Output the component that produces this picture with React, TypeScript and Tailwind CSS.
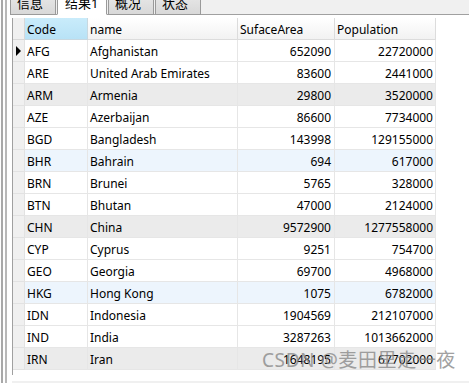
import React from "react";

const rows: [string, string, string, string, string][] = [
  ["AFG", "Afghanistan", "652090", "22720000", "w"],
  ["ARE", "United Arab Emirates", "83600", "2441000", "w"],
  ["ARM", "Armenia", "29800", "3520000", "g"],
  ["AZE", "Azerbaijan", "86600", "7734000", "w"],
  ["BGD", "Bangladesh", "143998", "129155000", "w"],
  ["BHR", "Bahrain", "694", "617000", "b"],
  ["BRN", "Brunei", "5765", "328000", "w"],
  ["BTN", "Bhutan", "47000", "2124000", "w"],
  ["CHN", "China", "9572900", "1277558000", "g"],
  ["CYP", "Cyprus", "9251", "754700", "w"],
  ["GEO", "Georgia", "69700", "4968000", "w"],
  ["HKG", "Hong Kong", "1075", "6782000", "b"],
  ["IDN", "Indonesia", "1904569", "212107000", "w"],
  ["IND", "India", "3287263", "1013662000", "w"],
  ["IRN", "Iran", "1648195", "67702000", "g"],
];

const bgFor = (k: string) =>
  k === "g" ? "bg-[#ebebeb]" : k === "b" ? "bg-[#edf5fd]" : "bg-white";

export default function App() {
  return (
    <div
      className="relative w-[469px] h-[383px] overflow-hidden bg-white text-black flex"
      style={{ fontFamily: "'Noto Sans', 'Noto Sans CJK SC', sans-serif" }}
    >
      {/* left frame lines */}
      <div className="w-[10px] h-full flex shrink-0">
        <div className="ml-[1px] w-[6px] h-full border-l-2 border-r-2 border-l-[#a8a8a8] border-r-[#b8b8b8]" />
      </div>

      <div className="flex-1 flex flex-col h-full">
        {/* tab bar */}
        <div className="h-[15px] bg-[#f0f0f0] border-b border-[#a0a0a0] flex items-end relative">
          <div className="flex h-[26px] items-stretch -mb-[1px]">
            <div className="w-[46px] border border-[#9a9a9a] bg-gradient-to-b from-[#ececec] to-[#d8d8d8] text-[13px] leading-none flex items-center pl-[6px] pt-[2px]">
              信息
            </div>
            <div className="w-[50px] ml-[1px] border border-[#9a9a9a] border-b-white bg-white text-[13px] leading-none flex items-center pl-[7px] pt-[2px]">
              结果1
            </div>
            <div className="w-[46px] ml-[1px] border border-[#9a9a9a] bg-gradient-to-b from-[#ececec] to-[#d8d8d8] text-[13px] leading-none flex items-center pl-[6px] pt-[2px]">
              概况
            </div>
            <div className="w-[46px] ml-[1px] border border-[#9a9a9a] bg-gradient-to-b from-[#ececec] to-[#d8d8d8] text-[13px] leading-none flex items-center pl-[6px] pt-[2px]">
              状态
            </div>
          </div>
        </div>

        {/* table area */}
        <div className="flex-1 pl-[2px] pt-[3px] flex flex-col">
          <div className="w-[424px] border-l border-[#a0a0a0] h-[357px] flex flex-col">
            {/* header */}
            <div className="flex h-[22px] text-[12px] leading-[22px] overflow-hidden">
              <div className="w-[12px] bg-[#f0f0f0] border-r border-b border-[#d8d8d8]" />
              <div className="w-[63px] bg-gradient-to-b from-[#c9ecfb] to-[#b8e2f6] border-r border-b border-[#c8d8e0] pl-[2px] pt-[1px]">
                Code
              </div>
              <div className="w-[150px] bg-gradient-to-b from-[#ffffff] to-[#f2f2f2] border-r border-b border-[#dcdcdc] pl-[2px] pt-[1px]">
                name
              </div>
              <div className="w-[97px] bg-gradient-to-b from-[#ffffff] to-[#f2f2f2] border-r border-b border-[#dcdcdc] pl-[2px] pt-[1px]">
                SufaceArea
              </div>
              <div className="w-[101px] bg-gradient-to-b from-[#ffffff] to-[#f2f2f2] border-r border-b border-[#dcdcdc] pl-[2px] pt-[1px]">
                Population
              </div>
            </div>
            {rows.map((r, i) => (
              <div key={r[0]} className="flex h-[22px] text-[12px] leading-[20px] overflow-hidden">
                <div className="w-[12px] bg-[#f0f0f0] border-r border-b border-[#e2e2e2] relative">
                  {i === 0 && (
                    <div className="absolute left-[3px] top-[6px] w-0 h-0 border-y-[5px] border-y-transparent border-l-[5px] border-l-black" />
                  )}
                </div>
                <div className={`w-[63px] ${bgFor(r[4])} border-r border-b border-[#e6e6e6] pl-[2px] pt-[2px]`}>
                  {r[0]}
                </div>
                <div className={`w-[150px] ${bgFor(r[4])} border-r border-b border-[#e6e6e6] pl-[2px] pt-[2px]`}>
                  {r[1]}
                </div>
                <div className={`w-[97px] ${bgFor(r[4])} border-r border-b border-[#e6e6e6] pr-[3px] pt-[2px] text-right`}>
                  {r[2]}
                </div>
                <div className={`w-[101px] ${bgFor(r[4])} border-r border-b border-[#e6e6e6] pr-[2px] pt-[2px] text-right`}>
                  {r[3]}
                </div>
              </div>
            ))}
          </div>
          <div className="h-[1px]" />
          <div className="mt-[5px] h-[7px] bg-[#f0f0f0]" />
        </div>
      </div>

      {/* watermark */}
      <div className="absolute left-[262px] top-[348px] text-[19px] leading-[24px] text-[#8a8a8a] opacity-80 whitespace-nowrap tracking-[0.6px]">
        CSDN @麦田里走一夜
      </div>
    </div>
  );
}
